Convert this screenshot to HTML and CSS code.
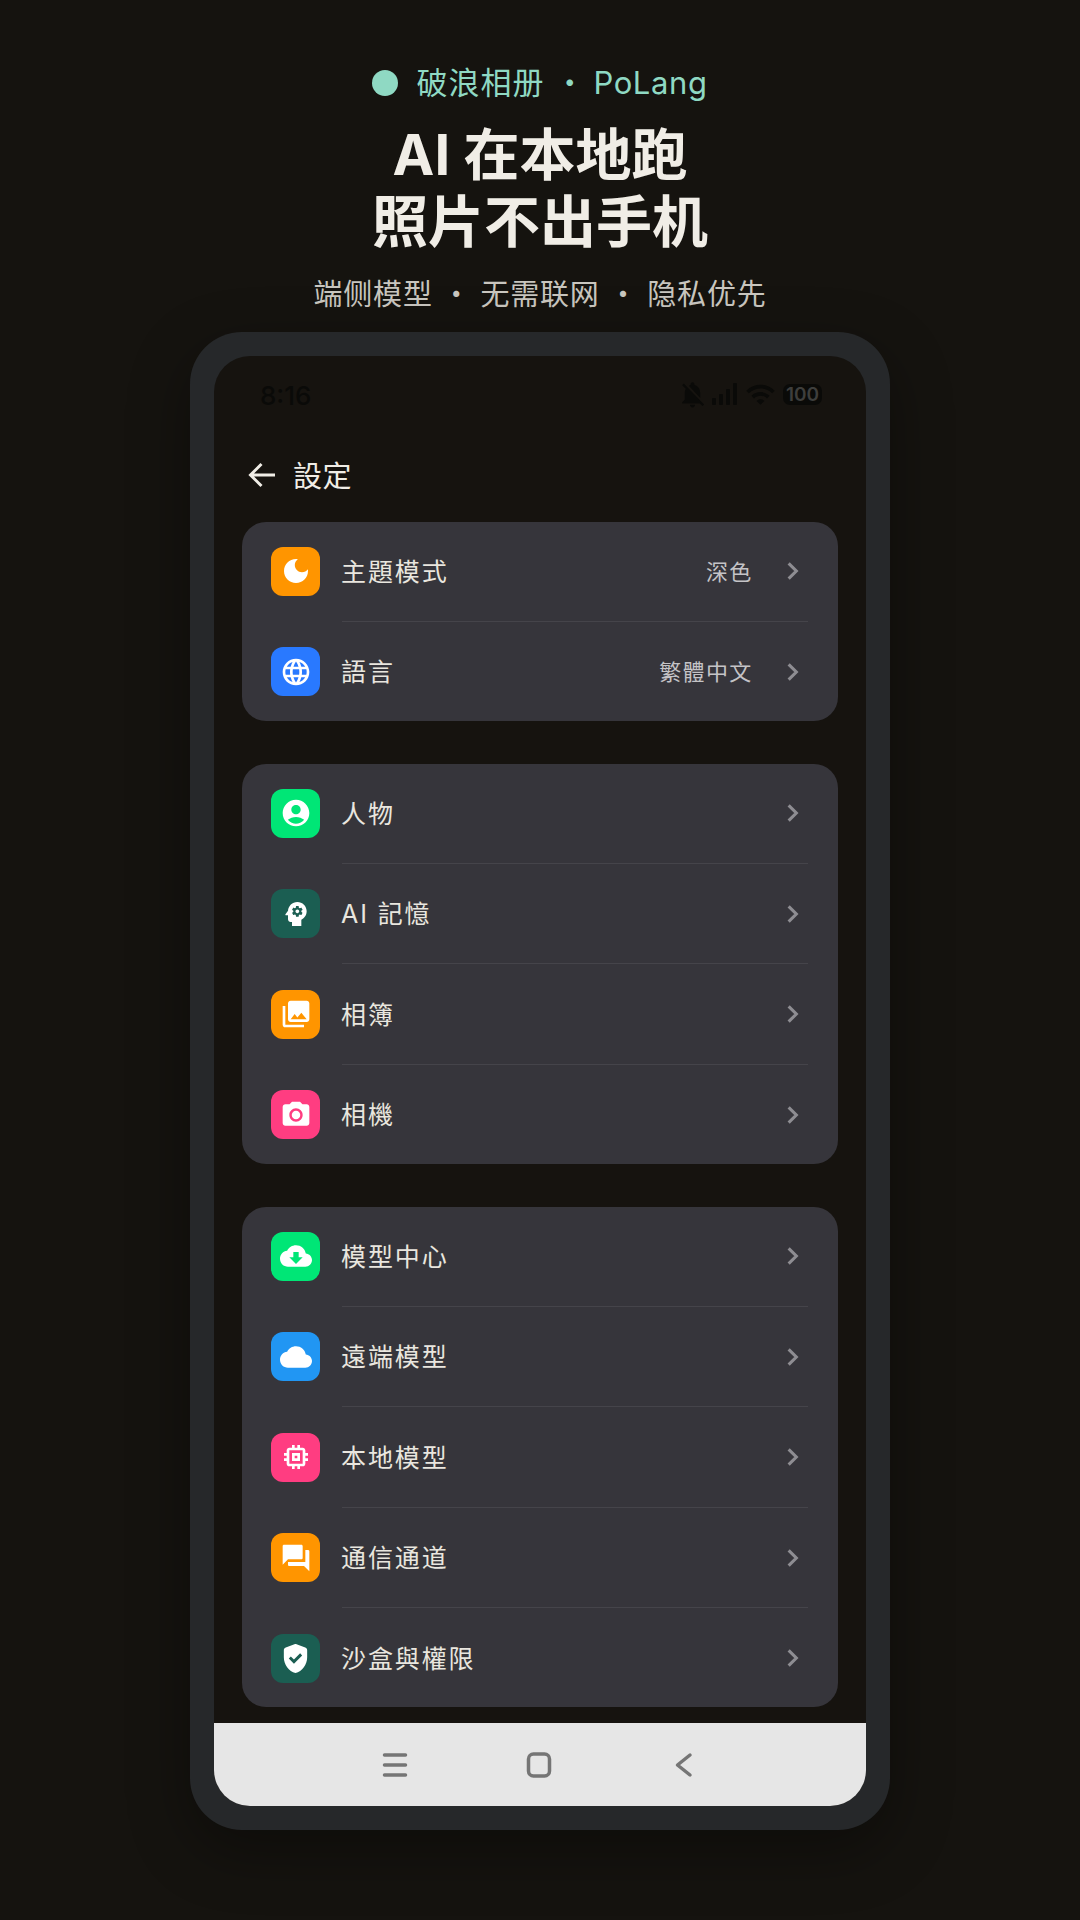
FILE: index.html
```html
<!DOCTYPE html>
<html lang="zh">

<head>
    <meta charset="utf-8">
    <title>PoLang</title>
    <link rel="stylesheet" href="styles.css">
</head>

<body>
    <header class="hero">
        <div class="brand"><span class="brand-dot"></span><span>破浪相册 ・ <span class="brand-en">PoLang</span></span></div>
        <h1>AI 在本地跑<br>照片不出手机</h1>
        <p class="tagline">端侧模型 ・ 无需联网 ・ 隐私优先</p>
    </header>

    <div class="phone">
        <div class="screen">
            <div class="status">
                <span class="time">8:16</span>
                <div class="status-icons">
                    <svg class="bell" width="31" height="31" viewBox="0 0 24 24"><path d="M20 18.69L7.84 6.14 5.27 3.49 4 4.76l2.8 2.8v.01c-.52.99-.8 2.16-.8 3.42v5l-2 2v1h13.730l2 2L21 19.720l-1-1.030zM12 22c1.110 0 2-.89 2-2h-4c0 1.110.89 2 2 2zm6-7.320V11c0-3.080-1.640-5.640-4.500-6.320V4c0-.83-.67-1.500-1.500-1.500s-1.500.67-1.500 1.500v.68c-.15.03-.29.08-.42.12-.1.03-.2.07-.3.11h-.01c-.2.08-.4.17-.59.27-.01 0-.01 0-.02.01L18 14.680z"/></svg>
                    <svg width="28" height="24" viewBox="0 0 28 24"><rect x="1" y="16" width="4" height="7" rx="1"/><rect x="8" y="12" width="4" height="11" rx="1"/><rect x="15" y="7" width="4" height="16" rx="1"/><rect x="22" y="1" width="4" height="22" rx="1"/></svg>
                    <svg width="31" height="31" viewBox="0 0 24 24"><path d="M1 9l2 2c4.970-4.970 13.030-4.970 18 0l2-2C16.930 2.930 7.080 2.930 1 9zm8 8l3 3 3-3c-1.650-1.660-4.340-1.660-6 0zm-4-4l2 2c2.760-2.760 7.240-2.760 10 0l2-2C15.140 9.140 8.870 9.140 5 13z"/></svg>
                    <span class="battery">100</span>
                </div>
            </div>

            <div class="toolbar">
                <svg class="back" width="32" height="32" viewBox="0 0 32 32"><path d="M29 16H5M15.500 5L4.500 16l11 11"/></svg>
                <span class="toolbar-title">設定</span>
            </div>

            <div class="list">
                <section class="card">
                    <div class="row">
                        <span class="badge orange"><svg viewBox="0 0 24 24"><path d="M12 3c-4.970 0-9 4.030-9 9s4.030 9 9 9 9-4.030 9-9c0-.46-.04-.92-.1-1.360-.98 1.370-2.580 2.260-4.400 2.260-2.980 0-5.400-2.420-5.400-5.400 0-1.810.89-3.420 2.260-4.400-.44-.06-.9-.1-1.360-.1z"/></svg></span>
                        <span class="label">主題模式</span>
                        <span class="value">深色</span>
                        <svg class="chevron" viewBox="0 0 12 20"><path d="M2.500 3l7 7-7 7"/></svg>
                    </div>
                    <div class="row">
                        <span class="badge blue"><svg viewBox="0 0 24 24"><path d="M11.990 2C6.470 2 2 6.480 2 12s4.470 10 9.990 10C17.520 22 22 17.520 22 12S17.520 2 11.990 2zm6.930 6h-2.950c-.32-1.250-.78-2.450-1.380-3.560 1.840.63 3.370 1.910 4.330 3.560zM12 4.040c.83 1.200 1.480 2.530 1.910 3.960h-3.820c.43-1.430 1.080-2.760 1.910-3.960zM4.260 14C4.100 13.360 4 12.690 4 12s.1-1.360.26-2h3.380c-.08.66-.14 1.320-.14 2 0 .68.06 1.340.14 2H4.260zm.82 2h2.950c.32 1.250.78 2.450 1.380 3.560-1.840-.63-3.370-1.900-4.330-3.560zm2.950-8H5.080c.96-1.660 2.490-2.930 4.330-3.560C8.810 5.550 8.350 6.750 8.030 8zM12 19.960c-.83-1.200-1.480-2.530-1.910-3.960h3.820c-.43 1.430-1.080 2.760-1.910 3.960zM14.340 14H9.660c-.09-.66-.16-1.320-.16-2 0-.68.07-1.350.16-2h4.680c.09.65.16 1.320.16 2 0 .68-.07 1.340-.16 2zm.25 5.560c.6-1.110 1.060-2.310 1.380-3.560h2.950c-.96 1.650-2.490 2.930-4.330 3.560zM16.360 14c.08-.66.14-1.320.14-2 0-.68-.06-1.340-.14-2h3.380c.16.64.26 1.310.26 2s-.1 1.360-.26 2h-3.380z"/></svg></span>
                        <span class="label">語言</span>
                        <span class="value">繁體中文</span>
                        <svg class="chevron" viewBox="0 0 12 20"><path d="M2.500 3l7 7-7 7"/></svg>
                    </div>
                </section>

                <section class="card">
                    <div class="row">
                        <span class="badge green"><svg viewBox="0 0 24 24"><path d="M12 2C6.480 2 2 6.480 2 12s4.480 10 10 10 10-4.480 10-10S17.520 2 12 2zm0 4c1.930 0 3.500 1.570 3.500 3.500S13.930 13 12 13s-3.500-1.570-3.500-3.500S10.070 6 12 6zm0 14c-2.030 0-4.430-.82-6.140-2.880C7.550 15.800 9.680 15 12 15s4.450.8 6.140 2.120C16.430 19.180 14.030 20 12 20z"/></svg></span>
                        <span class="label">人物</span>
                        <svg class="chevron" viewBox="0 0 12 20"><path d="M2.500 3l7 7-7 7"/></svg>
                    </div>
                    <div class="row">
                        <span class="badge teal"><svg viewBox="0 0 24 24"><path d="M13 8.570c-.79 0-1.430.64-1.430 1.430s.64 1.430 1.430 1.430 1.430-.64 1.430-1.430-.64-1.430-1.430-1.430z"/><path d="M13 3C9.250 3 6.200 5.940 6.020 9.640L4.100 12.200c-.25.33 0 .8.4.8H6v3c0 1.100.9 2 2 2h1v3h7v-4.680c2.360-1.120 4-3.530 4-6.320 0-3.870-3.130-7-7-7zm3 7c0 .13-.01.26-.02.39l.83.66c.08.06.1.16.05.25l-.8 1.390c-.05.09-.16.12-.24.09l-.99-.4c-.21.16-.43.29-.67.39L14 13.830c-.01.1-.1.17-.2.17h-1.600c-.1 0-.18-.07-.2-.17l-.15-1.060c-.25-.1-.47-.23-.68-.39l-.99.4c-.09.03-.2 0-.25-.09l-.8-1.390c-.05-.08-.03-.19.05-.25l.84-.66c-.01-.13-.02-.26-.02-.39s.02-.27.04-.39l-.85-.66c-.08-.06-.1-.16-.05-.26l.8-1.380c.05-.09.15-.12.24-.09l1 .4c.2-.15.43-.29.67-.39L12 6.170c.02-.1.1-.17.2-.17h1.600c.1 0 .18.07.2.17l.15 1.060c.24.1.46.23.67.39l1-.4c.09-.03.2 0 .24.09l.8 1.380c.05.09.03.2-.05.26l-.85.66c.03.12.04.25.04.39z"/></svg></span>
                        <span class="label">AI 記憶</span>
                        <svg class="chevron" viewBox="0 0 12 20"><path d="M2.500 3l7 7-7 7"/></svg>
                    </div>
                    <div class="row">
                        <span class="badge orange"><svg viewBox="0 0 24 24"><path d="M22 16V4c0-1.100-.9-2-2-2H8c-1.100 0-2 .9-2 2v12c0 1.100.9 2 2 2h12c1.100 0 2-.9 2-2zm-11-4l2.030 2.710L16 11l4 5H8l3-4zM2 6v14c0 1.100.9 2 2 2h14v-2H4V6H2z"/></svg></span>
                        <span class="label">相簿</span>
                        <svg class="chevron" viewBox="0 0 12 20"><path d="M2.500 3l7 7-7 7"/></svg>
                    </div>
                    <div class="row">
                        <span class="badge pink"><svg viewBox="0 0 24 24"><circle cx="12" cy="12" r="3.200"/><path d="M9 2L7.170 4H4c-1.100 0-2 .9-2 2v12c0 1.100.9 2 2 2h16c1.100 0 2-.9 2-2V6c0-1.100-.9-2-2-2h-3.170L15 2H9zm3 15c-2.760 0-5-2.240-5-5s2.240-5 5-5 5 2.240 5 5-2.240 5-5 5z"/></svg></span>
                        <span class="label">相機</span>
                        <svg class="chevron" viewBox="0 0 12 20"><path d="M2.500 3l7 7-7 7"/></svg>
                    </div>
                </section>

                <section class="card">
                    <div class="row">
                        <span class="badge green"><svg viewBox="0 0 24 24"><path d="M19.350 10.040C18.670 6.590 15.640 4 12 4 9.110 4 6.600 5.640 5.350 8.040 2.340 8.360 0 10.910 0 14c0 3.310 2.690 6 6 6h13c2.760 0 5-2.240 5-5 0-2.640-2.050-4.780-4.650-4.960zM17 13l-5 5-5-5h3V9h4v4h3z"/></svg></span>
                        <span class="label">模型中心</span>
                        <svg class="chevron" viewBox="0 0 12 20"><path d="M2.500 3l7 7-7 7"/></svg>
                    </div>
                    <div class="row">
                        <span class="badge sky"><svg viewBox="0 0 24 24"><path d="M19.350 10.040C18.670 6.590 15.640 4 12 4 9.110 4 6.600 5.640 5.350 8.040 2.340 8.360 0 10.910 0 14c0 3.310 2.690 6 6 6h13c2.760 0 5-2.240 5-5 0-2.640-2.050-4.780-4.650-4.960z"/></svg></span>
                        <span class="label">遠端模型</span>
                        <svg class="chevron" viewBox="0 0 12 20"><path d="M2.500 3l7 7-7 7"/></svg>
                    </div>
                    <div class="row">
                        <span class="badge pink"><svg viewBox="0 0 24 24"><path d="M15 9H9v6h6V9zm-2 4h-2v-2h2v2zm8-2V9h-2V7c0-1.100-.9-2-2-2h-2V3h-2v2h-2V3H9v2H7c-1.100 0-2 .9-2 2v2H3v2h2v2H3v2h2v2c0 1.100.9 2 2 2h2v2h2v-2h2v2h2v-2h2c1.100 0 2-.9 2-2v-2h2v-2h-2v-2h2zm-4 6H7V7h10v10z"/></svg></span>
                        <span class="label">本地模型</span>
                        <svg class="chevron" viewBox="0 0 12 20"><path d="M2.500 3l7 7-7 7"/></svg>
                    </div>
                    <div class="row">
                        <span class="badge orange"><svg viewBox="0 0 24 24"><path d="M21 6h-2v9H6v2c0 .55.45 1 1 1h11l4 4V7c0-.55-.45-1-1-1zm-4 6V3c0-.55-.45-1-1-1H3c-.55 0-1 .45-1 1v14l4-4h10c.55 0 1-.45 1-1z"/></svg></span>
                        <span class="label">通信通道</span>
                        <svg class="chevron" viewBox="0 0 12 20"><path d="M2.500 3l7 7-7 7"/></svg>
                    </div>
                    <div class="row">
                        <span class="badge teal"><svg class="shield" viewBox="0 0 24 24"><path fill-rule="evenodd" d="M11.300 2.260l-6 2.250C4.520 4.800 4 5.550 4 6.390v4.700c0 5.050 3.410 9.760 8 10.910 4.590-1.150 8-5.860 8-10.910v-4.700c0-.84-.52-1.590-1.300-1.880l-6-2.250c-.45-.17-.95-.17-1.400 0zm-.36 13.280L7.400 12l1.410-1.410 2.120 2.120 4.240-4.240 1.410 1.410-5.640 5.660z"/></svg></span>
                        <span class="label">沙盒與權限</span>
                        <svg class="chevron" viewBox="0 0 12 20"><path d="M2.500 3l7 7-7 7"/></svg>
                    </div>
                </section>
            </div>

            <nav class="navbar">
                <svg width="28" height="28" viewBox="0 0 28 28"><path d="M3.500 4h21M3.500 14h21M3.500 24h21"/></svg>
                <svg width="28" height="28" viewBox="0 0 28 28"><rect x="3.500" y="3" width="21" height="22" rx="5"/></svg>
                <svg width="28" height="28" viewBox="0 0 28 28"><path d="M21 4L8.500 14 21 24"/></svg>
            </nav>
        </div>
    </div>
</body>

</html>
```

FILE: styles.css
```css
* {
    box-sizing: border-box;
}

body {
    margin: 0;
    width: 1080px;
    height: 1920px;
    overflow: hidden;
    background-color: #15130f;
    font-family: Inter, "Noto Sans CJK SC", sans-serif;
    display: flex;
    flex-direction: column;
    align-items: center;
}

.hero {
    padding-top: 60px;
    height: 332px;
    text-align: center;
}

.brand {
    display: flex;
    align-items: center;
    justify-content: center;
    gap: 18px;
    font-size: 31px;
    line-height: 46px;
    letter-spacing: 1px;
    color: #8fd9c3;
}

.brand-en {
    margin-left: -2.500px;
    letter-spacing: 0.600px;
}

.brand-dot {
    width: 26px;
    height: 26px;
    border-radius: 50%;
    background-color: #8fd9c3;
}

.hero h1 {
    margin: 16px 0 0;
    font-size: 56px;
    line-height: 67px;
    font-weight: 700;
    color: #f0ede6;
}

.tagline {
    margin: 17px 0 0;
    font-size: 29px;
    line-height: 44px;
    letter-spacing: 0.800px;
    color: #c9c6bf;
}

.phone {
    width: 700px;
    height: 1498px;
    padding: 24px;
    border-radius: 52px;
    background-color: #26282a;
    box-shadow: 0 20px 60px rgba(0, 0, 0, 0.35);
}

.screen {
    height: 100%;
    border-radius: 36px;
    overflow: hidden;
    background-color: #16130f;
    display: flex;
    flex-direction: column;
}

.status {
    height: 78px;
    flex-shrink: 0;
    padding: 0 44px 0 46px;
    display: flex;
    align-items: center;
    justify-content: space-between;
    color: #0a0a08;
}

.time {
    font-size: 26px;
    font-weight: 500;
}

.status-icons {
    display: flex;
    align-items: center;
    gap: 6px;
    margin-bottom: 2px;
}

.status-icons svg {
    fill: #0a0a08;
}

.status-icons .bell {
    margin-right: -3px;
}

.battery {
    margin-left: 1px;
    width: 39px;
    height: 21px;
    border-radius: 7px;
    background-color: #0a0a08;
    color: #3e3e3c;
    font-size: 19px;
    font-weight: 600;
    line-height: 21px;
    text-align: center;
}

.toolbar {
    height: 88px;
    flex-shrink: 0;
    padding: 0 0 6px 32px;
    display: flex;
    align-items: center;
    gap: 15px;
}

.back {
    fill: none;
    stroke: #f0ede6;
    stroke-width: 3;
}

.toolbar-title {
    padding-bottom: 2px;
    font-size: 29px;
    letter-spacing: 0.600px;
    color: #f0ede6;
}

.list {
    flex: 1;
    padding: 0 28px;
    display: flex;
    flex-direction: column;
    gap: 43.500px;
}

.card {
    border-radius: 24px;
    background-color: #36353b;
}

.row {
    position: relative;
    height: 98px;
    padding: 0 38.500px 0 29px;
    display: flex;
    align-items: center;
}

.row + .row {
    margin-top: 2.500px;
}

.row + .row::before {
    content: "";
    position: absolute;
    top: -2px;
    left: 100px;
    right: 30px;
    height: 1px;
    background-color: #45444a;
}

.badge {
    width: 49px;
    height: 49px;
    margin-right: 21px;
    border-radius: 12px;
    display: flex;
    align-items: center;
    justify-content: center;
}

.badge svg {
    width: 32px;
    height: 32px;
    fill: #fff;
}

.badge .shield {
    width: 35px;
    height: 35px;
}

.orange { background-color: #ff9500; }
.blue { background-color: #2979ff; }
.green { background-color: #00e676; }
.teal { background-color: #1b5e52; }
.pink { background-color: #ff3d81; }
.sky { background-color: #2196f3; }

.label {
    flex: 1;
    padding-bottom: 3px;
    font-size: 25px;
    letter-spacing: 1.900px;
    color: #e9e6df;
}

.value {
    margin-right: 32px;
    padding-bottom: 3px;
    font-size: 22px;
    letter-spacing: 1.300px;
    color: #c4c3c6;
}

.chevron {
    width: 15px;
    height: 22px;
    fill: none;
    stroke: #8e8d92;
    stroke-width: 2.800;
}

.navbar {
    height: 83px;
    flex-shrink: 0;
    padding-right: 2px;
    background-color: #e6e6e6;
    display: flex;
    align-items: center;
    justify-content: center;
    gap: 116px;
}

.navbar svg {
    fill: none;
    stroke: #757575;
    stroke-width: 3.500;
    stroke-linecap: round;
    stroke-linejoin: round;
}
```
